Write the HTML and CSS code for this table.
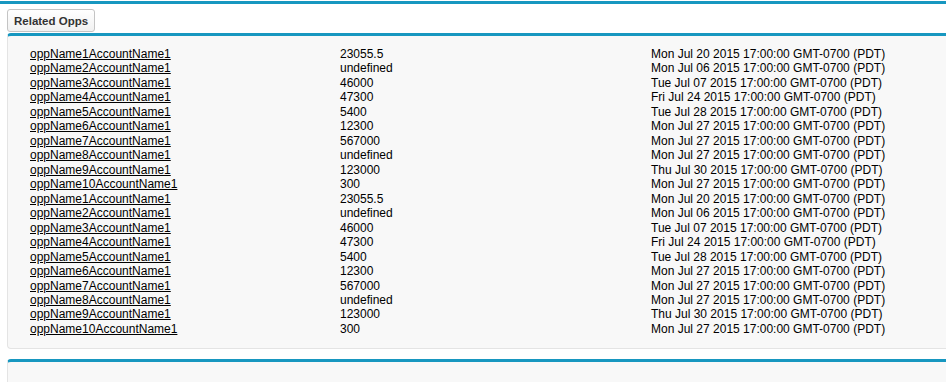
FILE: index.html
```html
<!DOCTYPE html>
<html>
<head>
<meta charset="utf-8">
<link rel="stylesheet" href="styles.css">
</head>
<body>
<div class="topbar"></div>
<div class="page">
  <button class="btn">Related Opps</button>
  <div class="panel">
    <table class="opps">
      <tbody>
        <tr><td class="c-name"><a href="#">oppName1AccountName1</a></td><td class="c-amt">23055.5</td><td class="c-date">Mon Jul 20 2015 17:00:00 GMT-0700 (PDT)</td></tr>
        <tr><td class="c-name"><a href="#">oppName2AccountName1</a></td><td class="c-amt">undefined</td><td class="c-date">Mon Jul 06 2015 17:00:00 GMT-0700 (PDT)</td></tr>
        <tr><td class="c-name"><a href="#">oppName3AccountName1</a></td><td class="c-amt">46000</td><td class="c-date">Tue Jul 07 2015 17:00:00 GMT-0700 (PDT)</td></tr>
        <tr><td class="c-name"><a href="#">oppName4AccountName1</a></td><td class="c-amt">47300</td><td class="c-date">Fri Jul 24 2015 17:00:00 GMT-0700 (PDT)</td></tr>
        <tr><td class="c-name"><a href="#">oppName5AccountName1</a></td><td class="c-amt">5400</td><td class="c-date">Tue Jul 28 2015 17:00:00 GMT-0700 (PDT)</td></tr>
        <tr><td class="c-name"><a href="#">oppName6AccountName1</a></td><td class="c-amt">12300</td><td class="c-date">Mon Jul 27 2015 17:00:00 GMT-0700 (PDT)</td></tr>
        <tr><td class="c-name"><a href="#">oppName7AccountName1</a></td><td class="c-amt">567000</td><td class="c-date">Mon Jul 27 2015 17:00:00 GMT-0700 (PDT)</td></tr>
        <tr><td class="c-name"><a href="#">oppName8AccountName1</a></td><td class="c-amt">undefined</td><td class="c-date">Mon Jul 27 2015 17:00:00 GMT-0700 (PDT)</td></tr>
        <tr><td class="c-name"><a href="#">oppName9AccountName1</a></td><td class="c-amt">123000</td><td class="c-date">Thu Jul 30 2015 17:00:00 GMT-0700 (PDT)</td></tr>
        <tr><td class="c-name"><a href="#">oppName10AccountName1</a></td><td class="c-amt">300</td><td class="c-date">Mon Jul 27 2015 17:00:00 GMT-0700 (PDT)</td></tr>
        <tr><td class="c-name"><a href="#">oppName1AccountName1</a></td><td class="c-amt">23055.5</td><td class="c-date">Mon Jul 20 2015 17:00:00 GMT-0700 (PDT)</td></tr>
        <tr><td class="c-name"><a href="#">oppName2AccountName1</a></td><td class="c-amt">undefined</td><td class="c-date">Mon Jul 06 2015 17:00:00 GMT-0700 (PDT)</td></tr>
        <tr><td class="c-name"><a href="#">oppName3AccountName1</a></td><td class="c-amt">46000</td><td class="c-date">Tue Jul 07 2015 17:00:00 GMT-0700 (PDT)</td></tr>
        <tr><td class="c-name"><a href="#">oppName4AccountName1</a></td><td class="c-amt">47300</td><td class="c-date">Fri Jul 24 2015 17:00:00 GMT-0700 (PDT)</td></tr>
        <tr><td class="c-name"><a href="#">oppName5AccountName1</a></td><td class="c-amt">5400</td><td class="c-date">Tue Jul 28 2015 17:00:00 GMT-0700 (PDT)</td></tr>
        <tr><td class="c-name"><a href="#">oppName6AccountName1</a></td><td class="c-amt">12300</td><td class="c-date">Mon Jul 27 2015 17:00:00 GMT-0700 (PDT)</td></tr>
        <tr><td class="c-name"><a href="#">oppName7AccountName1</a></td><td class="c-amt">567000</td><td class="c-date">Mon Jul 27 2015 17:00:00 GMT-0700 (PDT)</td></tr>
        <tr><td class="c-name"><a href="#">oppName8AccountName1</a></td><td class="c-amt">undefined</td><td class="c-date">Mon Jul 27 2015 17:00:00 GMT-0700 (PDT)</td></tr>
        <tr><td class="c-name"><a href="#">oppName9AccountName1</a></td><td class="c-amt">123000</td><td class="c-date">Thu Jul 30 2015 17:00:00 GMT-0700 (PDT)</td></tr>
        <tr><td class="c-name"><a href="#">oppName10AccountName1</a></td><td class="c-amt">300</td><td class="c-date">Mon Jul 27 2015 17:00:00 GMT-0700 (PDT)</td></tr>
      </tbody>
    </table>
  </div>
  <div class="panel panel-empty"></div>
</div>
</body>
</html>
```

FILE: styles.css
```css
html, body {
  margin: 0;
  padding: 0;
  background: #ffffff;
  font-family: "Liberation Sans", Arial, Helvetica, sans-serif;
  font-size: 12px;
  color: #000;
  overflow: hidden;
}
.topbar {
  margin-top: 1px;
  height: 3px;
  background: #1797c0;
}
.page {
  padding: 5px 0 0 7px;
  display: flex;
  flex-direction: column;
  align-items: flex-start;
}
.btn {
  height: 23px;
  padding: 0 6px;
  border: 1px solid #c4c4c4;
  border-radius: 3px;
  background: linear-gradient(#ffffff, #f1f1f1);
  font-family: "Liberation Sans", Arial, Helvetica, sans-serif;
  font-size: 11.5px;
  font-weight: bold;
  color: #333;
  margin: 0 0 1px 0;
}
.panel {
  align-self: stretch;
  margin-right: -20px;
  background: #f8f8f8;
  border-top: 3px solid #1797c0;
  border-left: 1px solid #e4e4e4;
  border-bottom: 1px solid #e4e4e4;
  border-radius: 4px 0 0 4px;
  padding: 11px 0 12px 22px;
}
.panel-empty {
  margin-top: 10px;
  height: 30px;
  padding: 0;
}
.opps {
  border-collapse: collapse;
}
.opps td {
  padding: 0;
  line-height: 14.47px;
  white-space: nowrap;
  vertical-align: top;
}
.c-name { width: 310px; }
.c-amt { width: 311px; }
.opps a {
  color: #000;
  text-decoration: underline;
}
```
